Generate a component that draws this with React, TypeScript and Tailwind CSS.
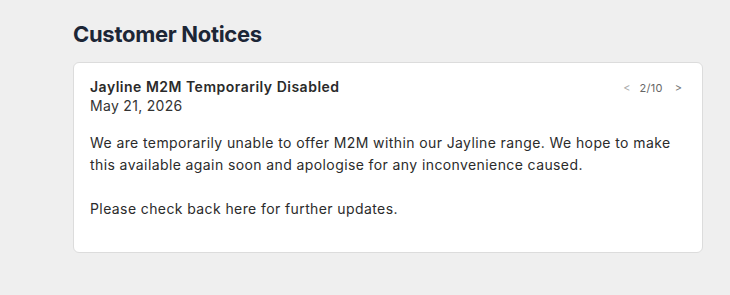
import React from "react";

export default function App() {
  return (
    <div className="min-h-[295px] w-[730px] bg-[#efefef] pl-[73px] pr-[27px] pt-[20px] font-['Inter',sans-serif]">
      <h1 className="text-[22px] font-bold leading-[28px] tracking-[-0.3px] text-[#1c2636]">Customer Notices</h1>
      <div className="mt-[14px] rounded-[6px] border border-[#dcdcdc] bg-white pl-[16px] pr-[20px] pt-[14px] pb-[32px] text-[#2b2b2b]">
        <div className="flex items-start justify-between">
          <div>
            <div className="text-[14px] font-semibold leading-[19px] tracking-[0.5px] text-[#2a2a2a]">Jayline M2M Temporarily Disabled</div>
            <div className="text-[14px] leading-[19px] tracking-[0.3px] text-[#333]">May 21, 2026</div>
          </div>
          <div className="mt-[3px] flex items-center text-[11px] text-[#666]">
            <span className="text-[#aaa]">&lt;</span>
            <span className="ml-[9px] tracking-[0.3px]">2/10</span>
            <span className="ml-[12px] text-[#777]">&gt;</span>
          </div>
        </div>
        <div className="mt-[17px] text-[14px] leading-[22px] tracking-[0.4px] text-[#2b2b2b]">
          <p>We are temporarily unable to offer M2M within our Jayline range. We hope to make this available again soon and apologise for any inconvenience caused.</p>
          <p className="mt-[22px]">Please check back here for further updates.</p>
        </div>
      </div>
    </div>
  );
}
